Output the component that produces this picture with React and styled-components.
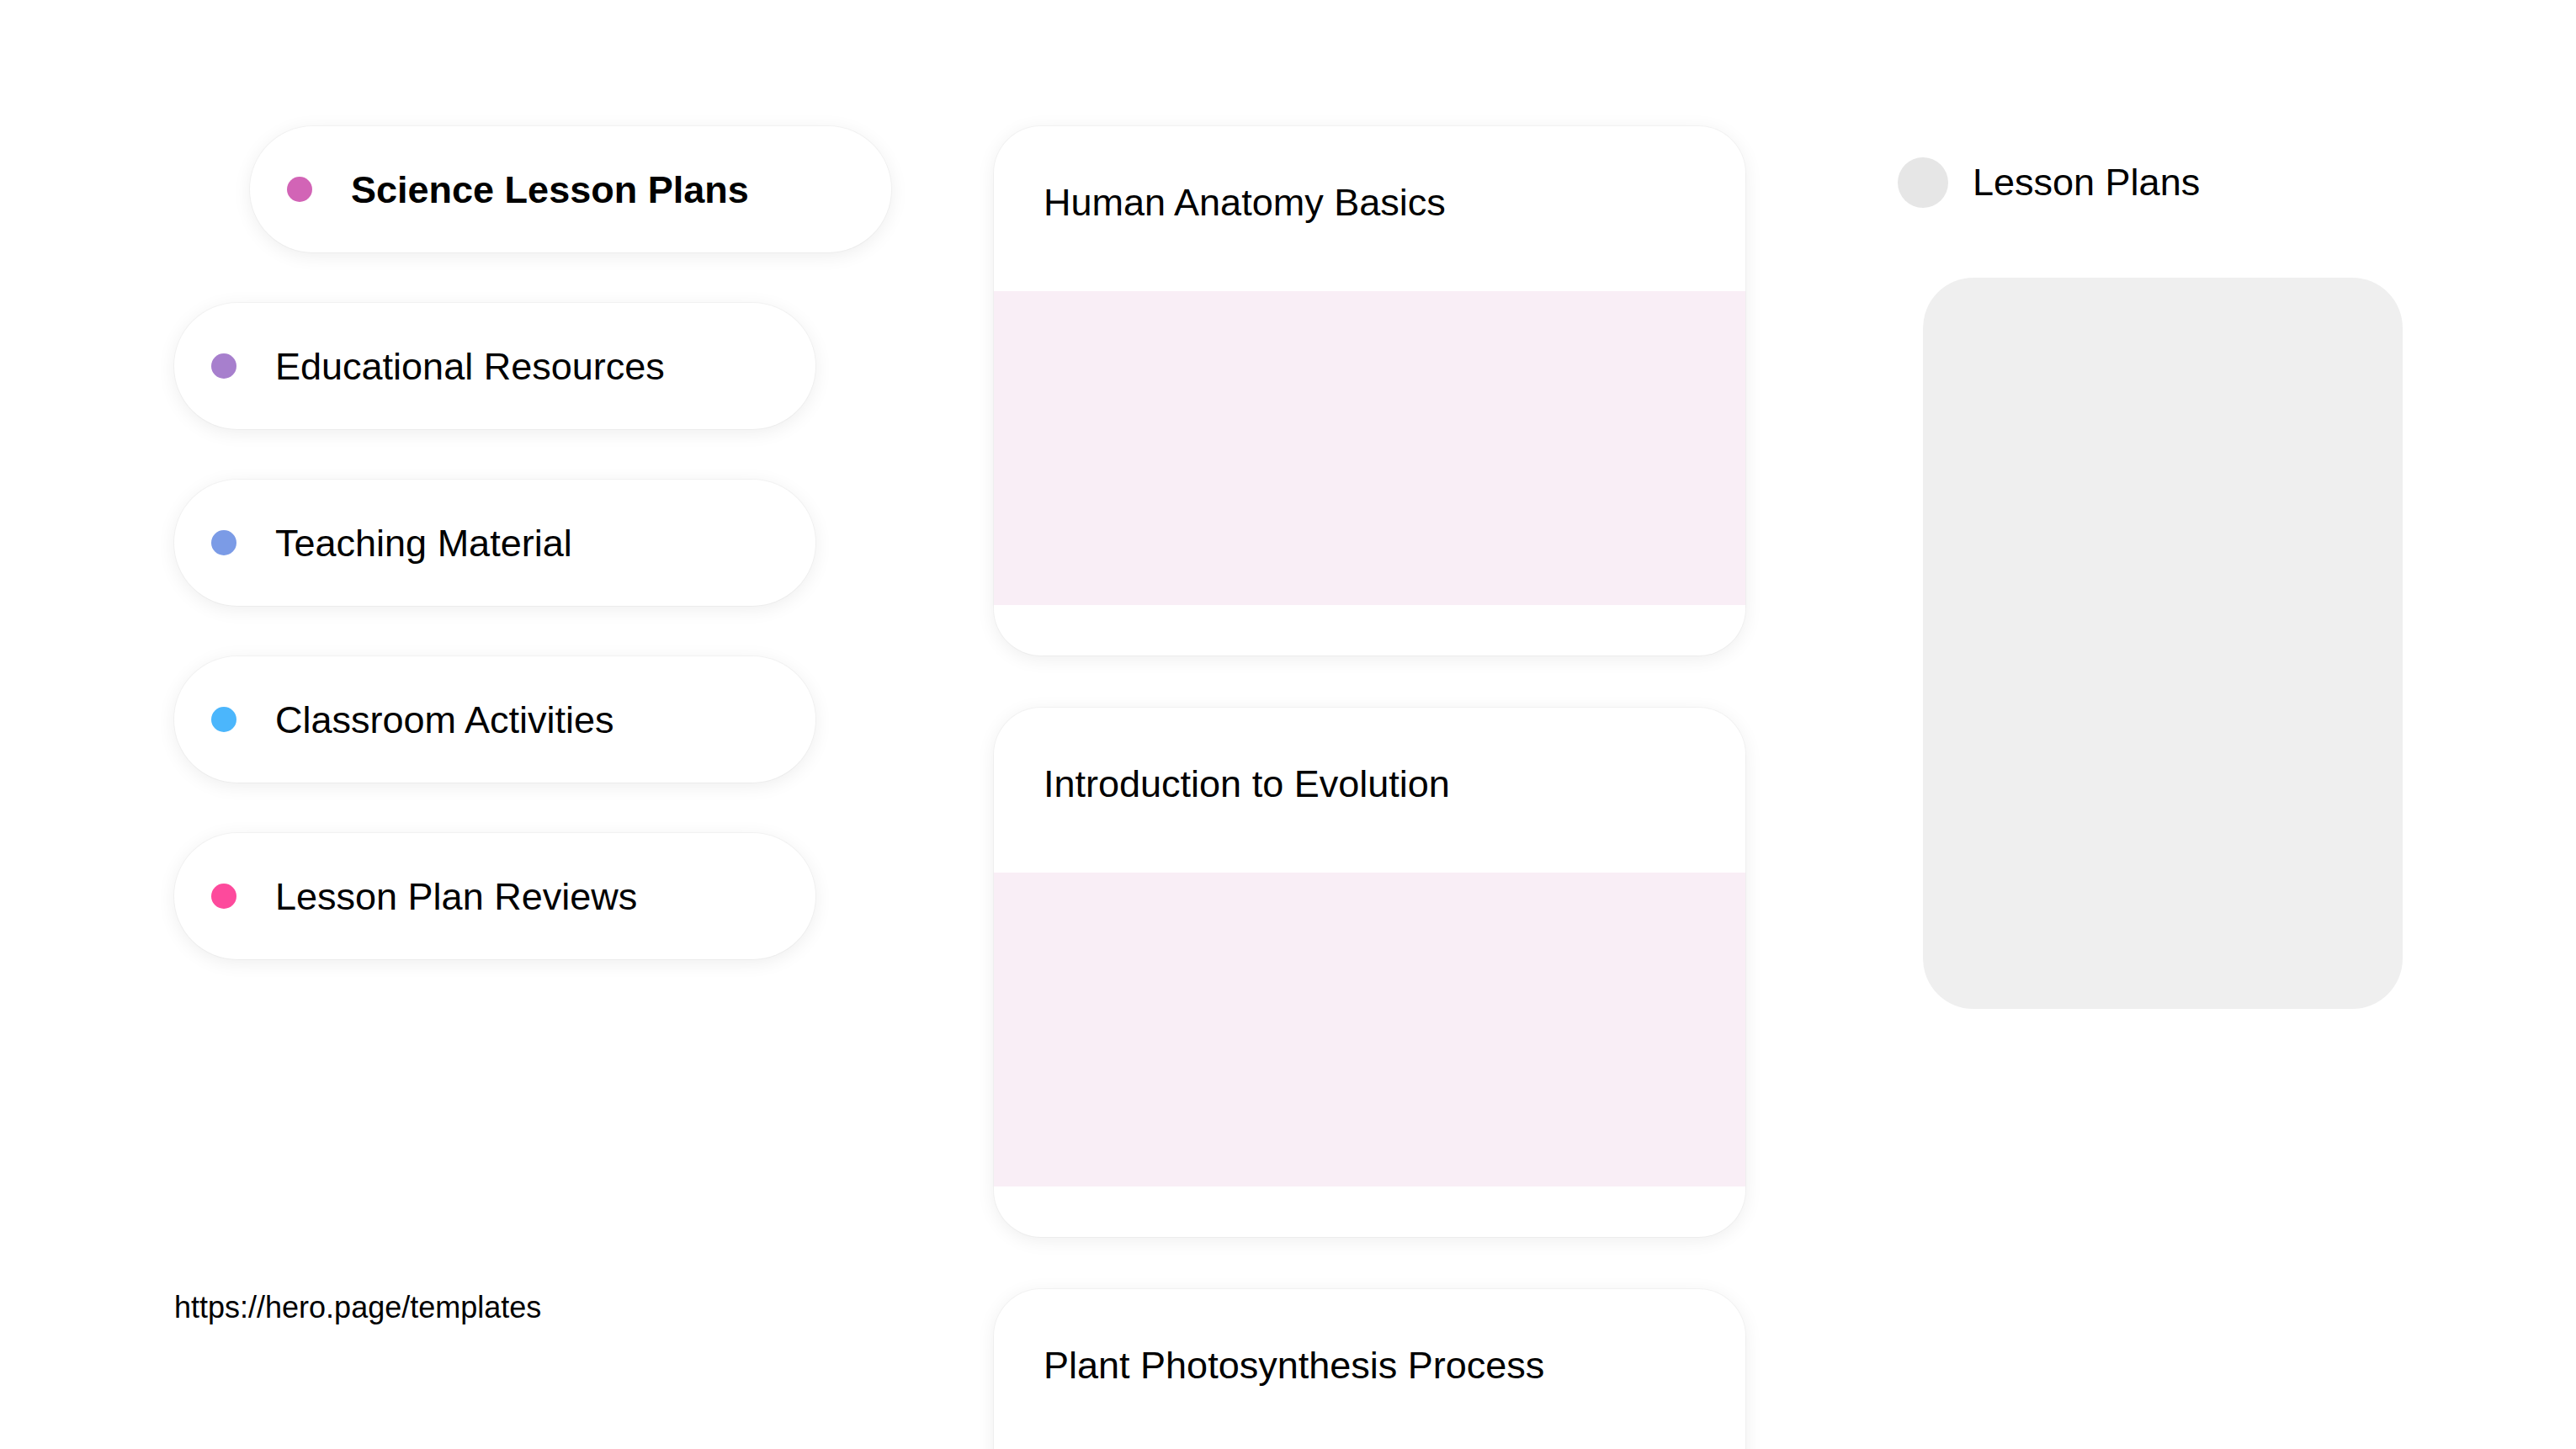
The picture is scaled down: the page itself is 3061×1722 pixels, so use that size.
import React from 'react'
import styled, { createGlobalStyle } from 'styled-components'

const GlobalStyle = createGlobalStyle`
  html, body {
    margin: 0;
    padding: 0;
    background: #ffffff;
    overflow: hidden;
  }
  body {
    font-family: "Liberation Sans", Arial, Helvetica, sans-serif;
    color: #000;
  }
`

const Page = styled.div`
  display: flex;
  align-items: flex-start;
  height: 1722px;
  box-sizing: border-box;
  padding: 150px 0 0 207px;
  overflow: hidden;
`

const LeftCol = styled.div`
  display: flex;
  flex-direction: column;
  gap: 60px;
  width: 852px;
  flex-shrink: 0;
`

const NavCard = styled.div`
  display: flex;
  align-items: center;
  gap: 46px;
  width: 762px;
  height: 150px;
  box-sizing: border-box;
  padding-left: 44px;
  margin-left: ${p => (p.$active ? '90px' : '0')};
  background: #fff;
  border-radius: 75px;
  box-shadow: 0 4px 22px rgba(0, 0, 0, 0.07), 0 0 0 1px rgba(0, 0, 0, 0.03);
`

const Dot = styled.span`
  display: block;
  flex-shrink: 0;
  width: ${p => p.$size || 30}px;
  height: ${p => p.$size || 30}px;
  border-radius: 50%;
  background: ${p => p.$color};
`

const NavLabel = styled.span`
  font-size: 45px;
  font-weight: ${p => (p.$active ? 700 : 400)};
  line-height: 1;
`

const FooterLink = styled.div`
  margin-top: 333px;
  font-size: 36px;
  line-height: 41px;
`

const MidCol = styled.div`
  display: flex;
  flex-direction: column;
  gap: 62px;
  width: 893px;
  margin-left: 122px;
  flex-shrink: 0;
`

const LessonCard = styled.div`
  display: flex;
  flex-direction: column;
  height: 629px;
  flex-shrink: 0;
  background: #fff;
  border-radius: 56px;
  overflow: hidden;
  box-shadow: 0 4px 22px rgba(0, 0, 0, 0.07), 0 0 0 1px rgba(0, 0, 0, 0.03);
`

const CardHeader = styled.div`
  height: 196px;
  box-sizing: border-box;
  padding: 65px 59px 0;
  font-size: 45px;
  line-height: 52px;
`

const CardMedia = styled.div`
  height: 373px;
  background: #f9eef6;
`

const RightCol = styled.div`
  display: flex;
  flex-direction: column;
  margin-left: 181px;
  padding-top: 37px;
`

const RightHeader = styled.div`
  display: flex;
  align-items: center;
  gap: 29px;
  font-size: 45px;
`

const Preview = styled.div`
  width: 570px;
  height: 869px;
  margin: 83px 0 0 30px;
  border-radius: 60px;
  background: #efefef;
`

const navItems = [
  { label: 'Science Lesson Plans', color: '#d264b6', active: true },
  { label: 'Educational Resources', color: '#a77fcd' },
  { label: 'Teaching Material', color: '#7b9be6' },
  { label: 'Classroom Activities', color: '#4bb6fc' },
  { label: 'Lesson Plan Reviews', color: '#fd4a9c' },
]

const lessons = [
  'Human Anatomy Basics',
  'Introduction to Evolution',
  'Plant Photosynthesis Process',
]

export default function App() {
  return (
    <>
      <GlobalStyle />
      <Page>
        <LeftCol>
          {navItems.map(item => (
            <NavCard key={item.label} $active={item.active}>
              <Dot $color={item.color} />
              <NavLabel $active={item.active}>{item.label}</NavLabel>
            </NavCard>
          ))}
          <FooterLink>https://hero.page/templates</FooterLink>
        </LeftCol>

        <MidCol>
          {lessons.map(title => (
            <LessonCard key={title}>
              <CardHeader>{title}</CardHeader>
              <CardMedia />
            </LessonCard>
          ))}
        </MidCol>

        <RightCol>
          <RightHeader>
            <Dot $size={60} $color="#e6e6e6" />
            <span>Lesson Plans</span>
          </RightHeader>
          <Preview />
        </RightCol>
      </Page>
    </>
  )
}
